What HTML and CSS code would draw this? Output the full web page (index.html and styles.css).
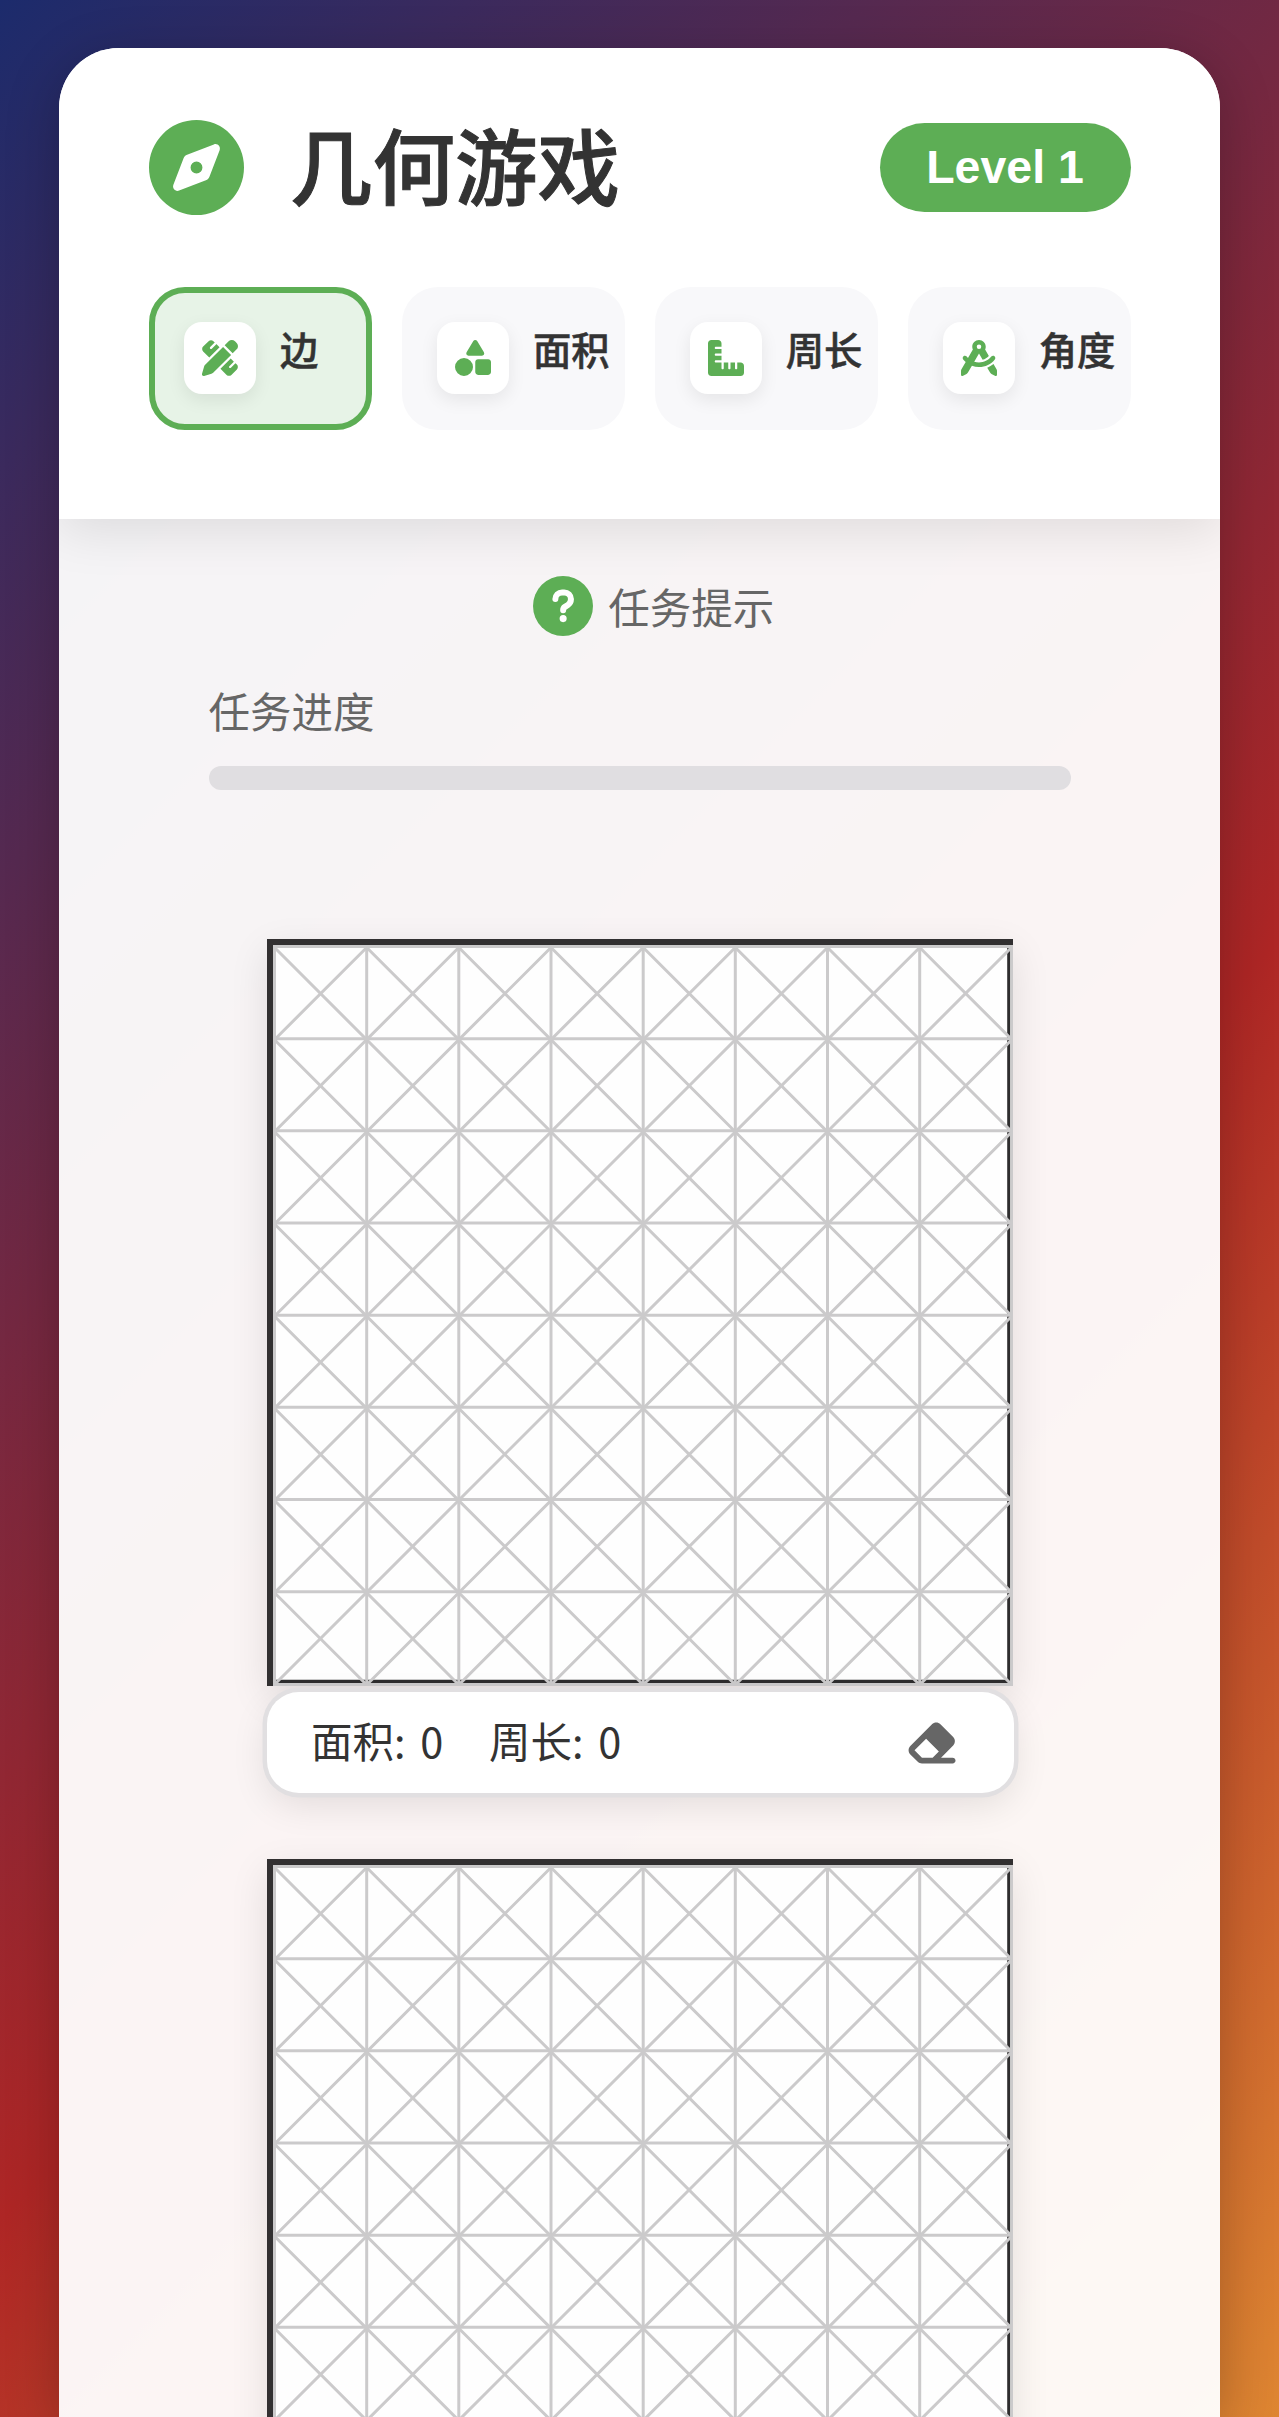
FILE: index.html
```html
<!DOCTYPE html>
<html lang="zh-CN">
<head>
<meta charset="utf-8">
<title>几何游戏</title>
<link rel="stylesheet" href="styles.css">
</head>
<body>
<svg class="defs" width="0" height="0" aria-hidden="true">
  <symbol id="board" viewBox="0 0 746 747">
    <rect width="743.3" height="744" fill="#fefefe"/>
    <path d="M3 0V747M0 3H746" stroke="#323031" stroke-width="6"/>
    <path d="M741.8 8V744M6 742.3H743.3" stroke="#2e2d2e" stroke-width="3.2"/>
    <g stroke="#cbcacb" stroke-width="3">
      <path d="M6 7.5H746M6 99.7H746M6 191.8H746M6 284H746M6 376.2H746M6 468.3H746M6 560.5H746M6 652.7H746M6 745.5H746"/>
      <path d="M7.5 6V747M99.7 6V747M191.8 6V747M284 6V747M376.2 6V747M468.3 6V747M560.5 6V747M652.7 6V747M744.6 6V747"/>
    </g>
    <g stroke="#cbcacb" stroke-width="3">
      <path d="M7 8L744 745M7 100.2L651.8 745M7 192.3L559.7 745M7 284.5L467.5 745M7 376.7L375.3 745M7 468.8L283.2 745M7 561L191 745M7 653.2L98.8 745M99.2 8L744 652.8M191.3 8L744 560.7M283.5 8L744 468.5M375.7 8L744 376.3M467.8 8L744 284.2M560 8L744 192M652.2 8L744 99.8"/>
      <path d="M99.2 9L7 101.2M191.3 9L7 193.3M283.5 9L7 285.5M375.7 9L7 377.7M467.8 9L7 469.8M560 9L7 562M652.2 9L7 654.2M744 9L8 745M744 101.5L100.5 745M744 193.7L192.7 745M744 285.8L284.8 745M744 378L377 745M744 470.2L469.2 745M744 562.3L561.3 745M744 654.5L653.5 745"/>
    </g>
  </symbol>
</svg>

<main class="card">
  <header class="header">
    <div class="title-row">
      <svg class="logo" viewBox="0 0 512 512"><path d="M256 512A256 256 0 1 0 256 0a256 256 0 1 0 0 512zm50.7-186.9L162.4 380.6c-19.4 7.5-38.5-11.6-31-31l55.5-144.3c3.3-8.5 9.9-15.1 18.4-18.4l144.3-55.5c19.4-7.5 38.5 11.6 31 31L325.1 306.7c-3.2 8.5-9.9 15.1-18.4 18.4zM288 256a32 32 0 1 0 -64 0 32 32 0 1 0 64 0z"/></svg>
      <h1 class="title">几何游戏</h1>
      <span class="level">Level 1</span>
    </div>
    <nav class="tabs">
      <button class="tab tab-active">
        <span class="tab-icon"><svg viewBox="0 0 512 512"><path d="M469.3 19.3l23.4 23.4c25 25 25 65.5 0 90.5l-56.4 56.4L322.3 75.7l56.4-56.4c25-25 65.5-25 90.5 0zM44.9 353.2L299.7 98.3 413.7 212.3 158.8 467.1c-6.7 6.7-15.1 11.6-24.2 14.2l-104.6 29.8c-8.4 2.4-17.4 .1-23.6-6.1s-8.5-15.2-6.1-23.6l29.8-104.6c2.6-9.2 7.5-17.5 14.2-24.2zM249.4 103.4L103.4 249.4 16 161.9c-18.7-18.7-18.7-49.1 0-67.9L94.1 16c18.7-18.7 49.1-18.7 67.9 0l19.8 19.8c-.3 .3-.7 .6-1 .9l-64 64c-6.2 6.2-6.2 16.4 0 22.6s16.4 6.2 22.6 0l64-64c.3-.3 .6-.7 .9-1l45.1 45.1zM408.6 262.6l45.1 45.1c-.3 .3-.7 .6-1 .9l-64 64c-6.2 6.2-6.2 16.4 0 22.6s16.4 6.2 22.6 0l64-64c.3-.3 .6-.7 .9-1L496 350.1c18.7 18.7 18.7 49.1 0 67.9L417.9 496c-18.7 18.7-49.1 18.7-67.9 0l-87.4-87.4L408.6 262.6z"/></svg></span>
        <span class="tab-label">边</span>
      </button>
      <button class="tab">
        <span class="tab-icon"><svg viewBox="0 0 512 512"><path d="M315.4 15.5C309.7 5.9 299.2 0 288 0s-21.7 5.9-27.4 15.5l-96 160c-5.9 9.9-6.1 22.2-.4 32.2s16.3 16.2 27.8 16.2H384c11.5 0 22.2-6.2 27.8-16.2s5.5-22.3-.4-32.2l-96-160zM288 312V456c0 22.1 17.9 40 40 40H472c22.1 0 40-17.9 40-40V312c0-22.1-17.9-40-40-40H328c-22.1 0-40 17.9-40 40zM128 512a128 128 0 1 0 0-256 128 128 0 1 0 0 256z"/></svg></span>
        <span class="tab-label">面积</span>
      </button>
      <button class="tab">
        <span class="tab-icon"><svg viewBox="0 0 512 512"><path d="M.2 468.9C2.7 493.1 23.1 512 48 512l96 0 320 0c26.5 0 48-21.5 48-48l0-96c0-26.5-21.5-48-48-48l-48 0 0 80c0 8.8-7.2 16-16 16s-16-7.2-16-16l0-80-64 0 0 80c0 8.8-7.2 16-16 16s-16-7.2-16-16l0-80-64 0 0 80c0 8.8-7.2 16-16 16s-16-7.2-16-16l0-80-80 0c-8.8 0-16-7.2-16-16s7.2-16 16-16l80 0 0-64-80 0c-8.8 0-16-7.2-16-16s7.2-16 16-16l80 0 0-64-80 0c-8.8 0-16-7.2-16-16s7.2-16 16-16l80 0 0-48c0-26.5-21.5-48-48-48L48 0C21.5 0 0 21.5 0 48L0 368l0 96c0 1.7 .1 3.3 .2 4.9z"/></svg></span>
        <span class="tab-label">周长</span>
      </button>
      <button class="tab">
        <span class="tab-icon"><svg viewBox="0 0 512 512"><path d="M352 96c0 14.3-3.1 27.9-8.8 40.2L396 227.4c-23.7 25.3-54.2 44.1-88.5 53.6L256 192h0 0l-68 117.5c21.5 6.8 44.3 10.5 68.1 10.5c70.7 0 133.8-32.7 174.9-84c11.1-13.8 31.2-16 45-5s16 31.2 5 45C428.1 341.8 347 384 256 384c-35.4 0-69.4-6.4-100.7-18.1L98.7 463.7C94 471.8 87 478.4 78.6 482.6L23.2 510.3c-5 2.5-10.9 2.2-15.6-.7S0 501.5 0 496V440.6c0-8.4 2.2-16.7 6.5-24.1l60-103.7C53.7 301.6 41.8 289.3 31.2 276c-11.1-13.8-8.8-33.9 5-45s33.9-8.8 45 5c5.7 7.1 11.8 13.8 18.2 20.1l69.4-119.9c-5.6-12.2-8.8-25.8-8.8-40.2c0-53 43-96 96-96s96 43 96 96zm21 297.9c32.6-12.8 62.5-30.8 88.9-52.9l43.7 75.5c4.2 7.3 6.5 15.6 6.5 24.1V496c0 5.5-2.9 10.7-7.6 13.6s-10.6 3.2-15.6 .7l-55.4-27.7c-8.4-4.2-15.4-10.8-20.1-18.9L373 393.9zM256 128a32 32 0 1 0 0-64 32 32 0 1 0 0 64z"/></svg></span>
        <span class="tab-label">角度</span>
      </button>
    </nav>
  </header>

  <section class="task">
    <div class="hint">
      <span class="hint-icon"><svg viewBox="0 0 320 512"><path d="M80 160c0-35.3 28.7-64 64-64h32c35.3 0 64 28.7 64 64v3.6c0 21.8-11.1 42.1-29.4 53.8l-42.2 27.1c-25.2 16.2-40.4 44.1-40.4 74V320c0 17.7 14.3 32 32 32s32-14.3 32-32v-1.4c0-8.2 4.2-15.8 11-20.2l42.2-27.1c36.6-23.6 58.8-64.1 58.8-107.7V160c0-70.7-57.3-128-128-128H144C73.3 32 16 89.3 16 160c0 17.7 14.3 32 32 32s32-14.3 32-32zm80 320a40 40 0 1 0 0-80 40 40 0 1 0 0 80z"/></svg></span>
      <span class="hint-text">任务提示</span>
    </div>
    <div class="progress-label">任务进度</div>
    <div class="progress"></div>
  </section>

  <section class="boards">
    <svg class="board"><use href="#board"/></svg>
    <div class="info">
      <span class="stat">面积: 0</span>
      <span class="stat">周长: 0</span>
      <svg class="eraser" viewBox="0 0 576 512"><path d="M290.7 57.4L57.4 290.7c-25 25-25 65.5 0 90.5l80 80c12 12 28.3 18.7 45.3 18.7H288h9.4H512c17.7 0 32-14.3 32-32s-14.3-32-32-32H387.9L518.6 285.3c25-25 25-65.5 0-90.5L381.3 57.4c-25-25-65.5-25-90.5 0zM297.4 416H288l-105.4 0-80-80L227.3 211.3 364.7 348.7 297.4 416z"/></svg>
    </div>
    <svg class="board"><use href="#board"/></svg>
  </section>
</main>
</body>
</html>
```
FILE: styles.css
```css
* {
  box-sizing: border-box;
}

body {
  margin: 0;
  height: 2417px;
  overflow: hidden;
  padding: 48px 59px 0;
  background: linear-gradient(135deg, #1c2b6c, #ae2625, #f6b638) 0 0 / 1279px 3160px no-repeat;
  font-family: "Noto Sans CJK SC", sans-serif;
  color: #333;
}

.defs {
  position: absolute;
}

.card {
  height: 2369px;
  border-radius: 60px 60px 0 0;
  overflow: hidden;
  background: rgba(255, 255, 255, 0.95);
  box-shadow: 0 12px 54px rgba(0, 0, 0, 0.24);
}

.header {
  height: 471px;
  padding: 71.5px 89.5px 0 90px;
  background: #fff;
  box-shadow: 0 12px 48px rgba(0, 0, 0, 0.1);
}

.title-row {
  display: flex;
  align-items: center;
  height: 96px;
}

.logo {
  width: 95px;
  height: 95px;
  fill: #5dae55;
}

.title {
  margin: -9px auto 0 46px;
  font-size: 82.5px;
  font-weight: 500;
  line-height: 96px;
  -webkit-text-stroke: 1px #333;
}

.level {
  width: 251px;
  height: 89px;
  border-radius: 45px;
  background: #5dae55;
  color: #fff;
  font: 700 46.5px/88px "Liberation Sans", sans-serif;
  text-align: center;
}

.tabs {
  display: grid;
  grid-template-columns: repeat(4, minmax(0, 1fr));
  gap: 30px;
  margin-top: 71px;
}

.tab {
  display: flex;
  align-items: flex-start;
  gap: 24px;
  height: 143.5px;
  padding: 29.5px 0 0 29px;
  border: 6px solid transparent;
  border-radius: 36px;
  background: #f8f8fa;
  color: #333;
  font-family: inherit;
}

.tab-active {
  border-color: #5dae55;
  background: #e7f3e7;
}

.tab-icon {
  flex: none;
  display: flex;
  align-items: center;
  justify-content: center;
  width: 72px;
  height: 72px;
  border-radius: 18px;
  background: #fff;
  box-shadow: 0 6px 18px rgba(0, 0, 0, 0.08);
}

.tab-icon svg {
  width: 36px;
  height: 36px;
  fill: #5dae55;
}

.tab-label {
  font-size: 38.3px;
  font-weight: 500;
  line-height: 53px;
  white-space: nowrap;
  -webkit-text-stroke: 0.5px #333;
}

.task {
  padding: 57px 149px 0 149.5px;
}

.hint {
  display: flex;
  align-items: center;
  justify-content: center;
  gap: 15px;
  height: 60px;
  padding-left: 28px;
}

.hint-icon {
  display: flex;
  align-items: center;
  justify-content: center;
  width: 60px;
  height: 60px;
  border-radius: 50%;
  background: #5dae55;
}

.hint-icon svg {
  width: 22.3px;
  height: 35.6px;
  fill: #fff;
  stroke: #fff;
  stroke-width: 22px;
  overflow: visible;
}

.hint-text,
.progress-label {
  font-size: 41.5px;
  line-height: 60px;
  color: #666;
}

.progress-label {
  margin-top: 44px;
}

.progress {
  height: 24px;
  margin-top: 26px;
  border-radius: 12px;
  background: #e0dee1;
}

.boards {
  display: flex;
  flex-direction: column;
  width: 747px;
  margin: 149px 0 0 208px;
}

.board {
  flex: none;
  display: block;
  width: 746px;
  height: 747px;
  box-shadow: 0 12px 36px rgba(0, 0, 0, 0.1);
}

.info {
  display: flex;
  align-items: center;
  gap: 45.5px;
  height: 101px;
  margin: 6px 0 65.5px;
  padding: 0 55.5px 0 44px;
  border-radius: 32px;
  background: #fff;
  box-shadow: 0 0 0 4.5px #e1dfe1, 0 12px 36px rgba(0, 0, 0, 0.1);
}

.stat {
  margin-top: -6px;
  font-size: 41.5px;
  line-height: 60px;
  word-spacing: 5.5px;
}

.eraser {
  width: 53.5px;
  height: 47.6px;
  margin-left: auto;
  fill: #666;
}
```
